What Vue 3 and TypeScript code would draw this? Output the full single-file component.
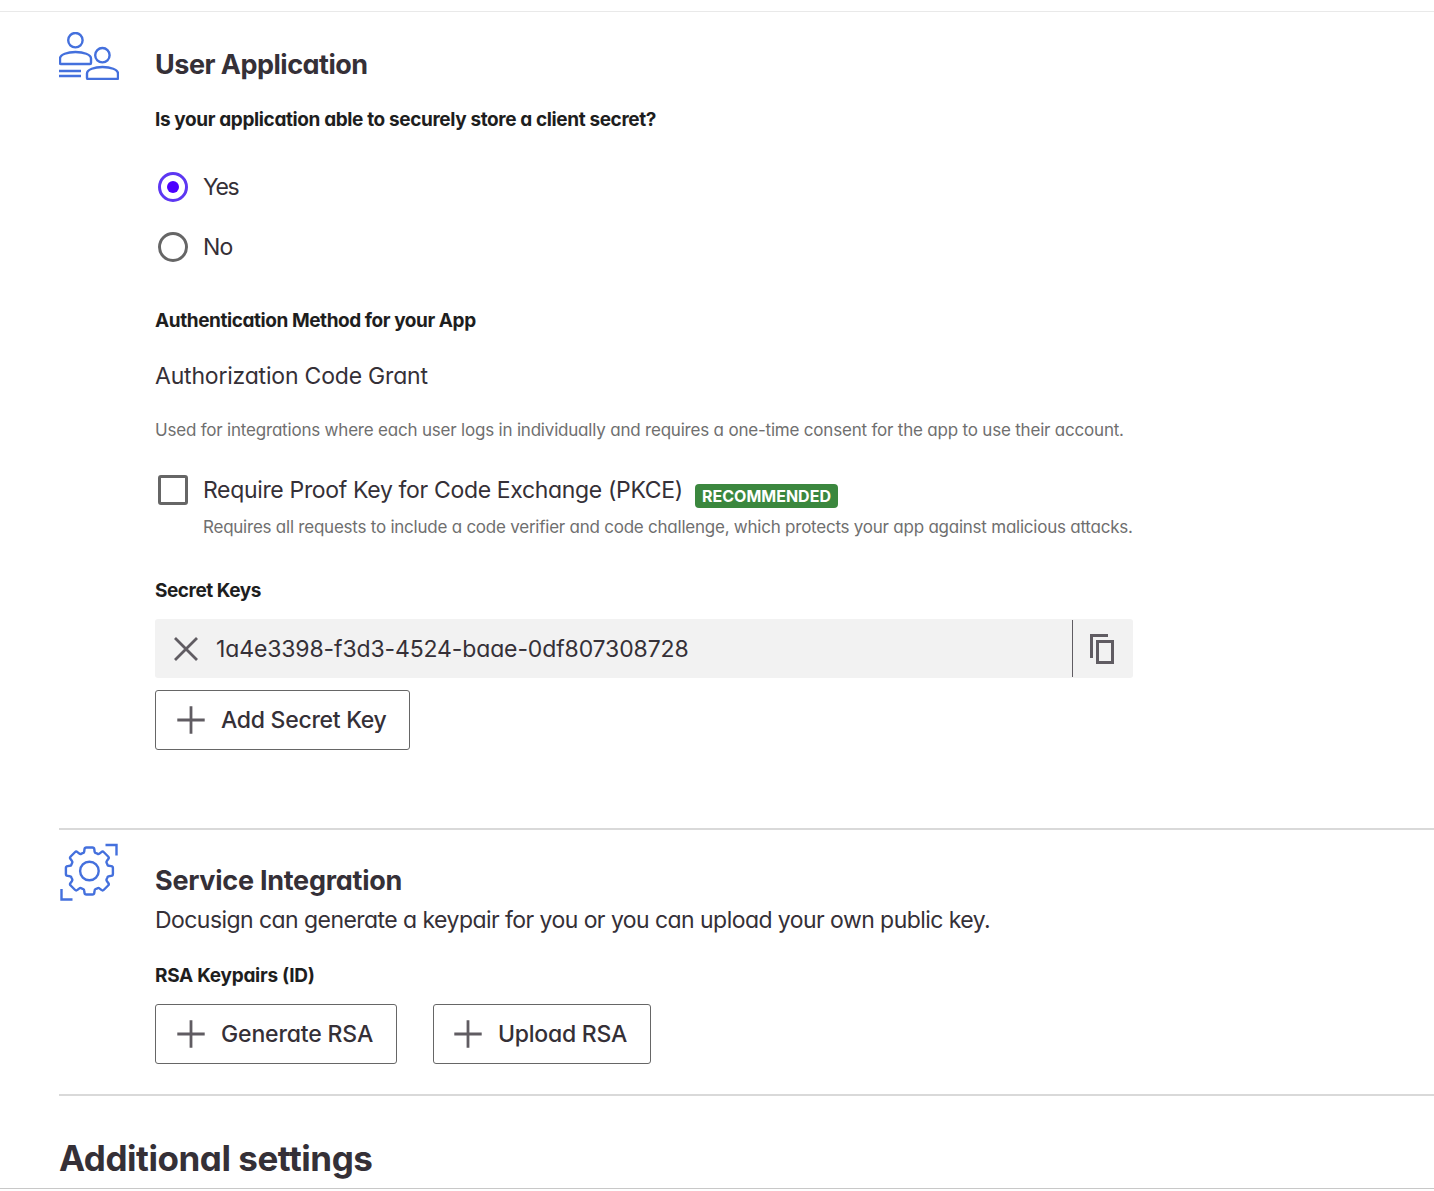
<script setup lang="ts">
import { ref } from 'vue'

const canStoreSecret = ref<'yes' | 'no'>('yes')
const options: { value: 'yes' | 'no'; label: string }[] = [
  { value: 'yes', label: 'Yes' },
  { value: 'no', label: 'No' },
]
const requirePkce = ref(false)
const secretKeys = ['1a4e3398-f3d3-4524-baae-0df807308728']

// Eight-tooth gear outline centred on the origin, one rounded tooth every 45 degrees.
function gearOutline(): string {
  const parts: string[] = []
  for (let i = 0; i < 8; i++) {
    const a = (i * Math.PI) / 4
    const at = (x: number, y: number) =>
      `${(x * Math.cos(a) - y * Math.sin(a)).toFixed(2)} ${(x * Math.sin(a) + y * Math.cos(a)).toFixed(2)}`
    parts.push(
      `${i === 0 ? 'M' : 'L'}${at(-6.6, -17.9)}`,
      `Q${at(-5.3, -18.2)} ${at(-5.2, -19.4)}`,
      `L${at(-4.9, -21.8)}`,
      `Q${at(-4.7, -23.5)} ${at(-3, -23.5)}`,
      `L${at(3, -23.5)}`,
      `Q${at(4.7, -23.5)} ${at(4.9, -21.8)}`,
      `L${at(5.2, -19.4)}`,
      `Q${at(5.3, -18.2)} ${at(6.6, -17.9)}`,
    )
  }
  return parts.join('') + 'Z'
}
const gearPath = gearOutline()
</script>

<template>
  <main class="page">
    <section class="section user">
      <div class="art">
        <svg width="60" height="48" viewBox="0 0 60 48" class="line-art">
          <circle cx="16.4" cy="8.2" r="7.2" />
          <path d="M1 31v-4.500C1 22.500 8.500 20 16.500 20S32 22.500 32 26.500V31q0 1-1 1H2q-1 0-1-1Z" />
          <circle cx="43.400" cy="23.200" r="7.200" />
          <path d="M28 46v-4.500C28 37.500 35.500 35 43.500 35S59 37.500 59 41.500V46q0 1-1 1H29q-1 0-1-1Z" />
          <path d="M0 39H22M0 44H22" />
        </svg>
      </div>
      <div class="content">
        <h2 class="title t-user">User Application</h2>
        <h3 class="label question">Is your application able to securely store a client secret?</h3>
        <div class="radios" role="radiogroup">
          <div
            v-for="o in options"
            :key="o.value"
            class="radio-row"
            role="radio"
            :aria-checked="canStoreSecret === o.value"
            @click="canStoreSecret = o.value"
          >
            <span class="radio" :class="{ on: canStoreSecret === o.value }"></span>
            <span class="body" :class="'opt-' + o.value">{{ o.label }}</span>
          </div>
        </div>
        <h3 class="label method">Authentication Method for your App</h3>
        <p class="body grant">Authorization Code Grant</p>
        <p class="hint grant-hint">Used for integrations where each user logs in individually and requires a one-time consent for the app to use their account.</p>
        <div class="pkce">
          <span class="checkbox" role="checkbox" :aria-checked="requirePkce" @click="requirePkce = !requirePkce"></span>
          <div>
            <div class="pkce-line">
              <span class="body pkce-text">Require Proof Key for Code Exchange (PKCE)</span>
              <span class="badge"><span>RECOMMENDED</span></span>
            </div>
            <p class="hint pkce-hint">Requires all requests to include a code verifier and code challenge, which protects your app against malicious attacks.</p>
          </div>
        </div>
        <h3 class="label keys">Secret Keys</h3>
        <div v-for="key in secretKeys" :key="key" class="key-row">
          <svg class="remove" width="24" height="24" viewBox="0 0 24 24"><path d="M1 1L23 23M23 1L1 23" /></svg>
          <span class="body key-text">{{ key }}</span>
          <button class="copy" aria-label="Copy">
            <svg width="24" height="30" viewBox="0 0 24 30"><path d="M1.500 24V1.500H18M7.500 7.500H22.500V28.500H7.500Z" /></svg>
          </button>
        </div>
        <button class="btn add">
          <svg class="plus" width="28" height="28" viewBox="0 0 28 28"><path d="M14 0.300V27.700M0.300 14H27.700" /></svg>
          <span class="b-add">Add Secret Key</span>
        </button>
      </div>
    </section>

    <section class="section service">
      <div class="art">
        <svg width="60" height="60" viewBox="0 0 60 60" class="line-art gear">
          <path :d="gearPath" transform="translate(30.400 28)" />
          <circle cx="30.400" cy="28" r="9.300" />
          <path d="M46.500 2H57.500V12.500M2.500 46V56.500H13.500" />
        </svg>
      </div>
      <div class="content">
        <h2 class="title t-service">Service Integration</h2>
        <p class="body desc">Docusign can generate a keypair for you or you can upload your own public key.</p>
        <h3 class="label rsa">RSA Keypairs (ID)</h3>
        <div class="actions">
          <button class="btn generate">
            <svg class="plus" width="28" height="28" viewBox="0 0 28 28"><path d="M14 0.300V27.700M0.300 14H27.700" /></svg>
            <span class="b-gen">Generate RSA</span>
          </button>
          <button class="btn upload">
            <svg class="plus" width="28" height="28" viewBox="0 0 28 28"><path d="M14 0.300V27.700M0.300 14H27.700" /></svg>
            <span class="b-up">Upload RSA</span>
          </button>
        </div>
      </div>
    </section>

    <footer class="more"><h1 class="t-more">Additional settings</h1></footer>
  </main>
</template>

<style>
body {
  margin: 0;
  background: #fff;
  overflow: hidden;
}
</style>

<style scoped>
.page {
  box-sizing: border-box;
  width: 100%;
  margin-top: 11px;
  height: 1178px;
  border-top: 1px solid #e9e9e9;
  border-bottom: 1px solid #c8c8c8;
  padding-left: 59px;
  overflow: hidden;
  font-family: Inter, "Liberation Sans", sans-serif;
  font-feature-settings: "cv11";
  color: #353037;
  white-space: nowrap;
}
h1, h2, h3, p { margin: 0; }
.section {
  box-sizing: border-box;
  display: flex;
  border-bottom: 2px solid #d9d9d9;
}
.user { height: 818px; }
.service { height: 266px; }
.art { width: 96px; flex: none; }
.user .art { padding-top: 20px; }
.service .art { padding-top: 13px; }
.line-art {
  display: block;
  fill: none;
  stroke: #4470dd;
  stroke-width: 2.4;
}
.content { width: 978px; }
.title { font-size: 27px; line-height: 32px; font-weight: 650; }
.label { font-size: 19px; line-height: 24px; font-weight: 650; color: #1e1e1e; }
.body { font-size: 23px; line-height: 32px; font-weight: 400; }
.hint { font-size: 17px; line-height: 24px; font-weight: 400; color: #6f6f6f; }

.t-user { margin-top: 37px; letter-spacing: -0.5px; }
.question { margin-top: 27px; letter-spacing: -0.38px; }
.radios { margin: 25px 0 32px 3px; }
.radio-row { display: flex; align-items: center; height: 60px; gap: 15px; }
.radio {
  box-sizing: border-box;
  width: 30px;
  height: 30px;
  border: 3px solid #666;
  border-radius: 50%;
  display: flex;
  align-items: center;
  justify-content: center;
}
.radio.on { border-color: #5d37f2; }
.radio.on::after {
  content: '';
  width: 12px;
  height: 12px;
  border-radius: 50%;
  background: #4c00ff;
}
.opt-yes { letter-spacing: -1.4px; }
.opt-no { letter-spacing: -0.8px; }
.method { letter-spacing: -0.43px; }
.grant { margin-top: 27px; letter-spacing: -0.2px; }
.grant-hint { margin-top: 26px; letter-spacing: -0.2px; }
.pkce { display: flex; gap: 15px; margin: 32px 0 0 3px; }
.checkbox {
  box-sizing: border-box;
  flex: none;
  width: 30px;
  height: 30px;
  margin-top: 1px;
  border: 3px solid #666;
  border-radius: 3px;
}
.pkce-line { display: flex; height: 32px; }
.pkce-text { width: 492px; letter-spacing: -0.34px; }
.badge {
  box-sizing: border-box;
  width: 143px;
  height: 24px;
  margin-top: 10px;
  padding-left: 7px;
  border-radius: 4px;
  background: #3b873e;
  color: #fff;
  font-size: 16px;
  line-height: 24px;
  font-weight: 650;
}
.pkce-hint { margin-top: 9px; letter-spacing: -0.235px; }
.keys { margin-top: 40px; letter-spacing: -0.45px; }
.key-row {
  display: flex;
  align-items: center;
  height: 59px;
  margin-top: 16px;
  padding-left: 19px;
  background: #f2f2f2;
  border-radius: 3px;
}
.remove, .plus, .copy svg { flex: none; fill: none; stroke: #605c62; stroke-width: 2.8; }
.key-text { flex: 1; margin-left: 18px; letter-spacing: -0.13px; }
.copy {
  display: flex;
  align-items: center;
  width: 61px;
  height: 57px;
  padding: 0 0 0 17px;
  border: 0;
  border-left: 1px solid #605c62;
  background: none;
}
.copy svg { stroke-width: 3; }
.btn {
  box-sizing: border-box;
  display: flex;
  align-items: center;
  gap: 16px;
  height: 60px;
  padding: 0 0 0 21px;
  border: 1px solid #666;
  border-radius: 3px;
  background: #fff;
  color: inherit;
  font: 450 23px/32px Inter, "Liberation Sans", sans-serif;
  font-feature-settings: "cv11";
}
.b-add { letter-spacing: -0.28px; }
.b-gen { letter-spacing: -0.15px; }
.b-up { letter-spacing: -0.25px; }
.add { width: 255px; margin-top: 12px; }
.t-service { margin-top: 35px; letter-spacing: -0.27px; }
.desc { margin-top: 7px; letter-spacing: -0.555px; }
.rsa { margin-top: 28px; letter-spacing: -0.28px; }
.actions { display: flex; gap: 36px; margin-top: 16px; }
.generate { width: 242px; }
.upload { width: 218px; padding-left: 20px; }
.more h1 { margin-top: 40px; font-size: 35px; line-height: 44px; font-weight: 650; letter-spacing: -0.46px; }
</style>
